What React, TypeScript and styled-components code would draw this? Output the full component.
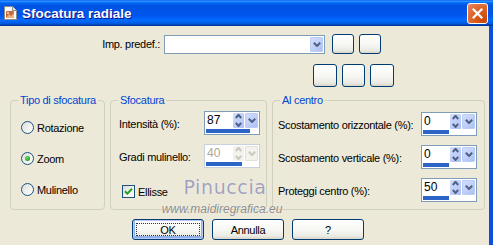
import React from 'react'
import styled, { createGlobalStyle } from 'styled-components'

const GlobalStyle = createGlobalStyle`
    html, body {
        margin: 0;
        padding: 0;
        background: #ece9d8;
    }
    body {
        font-family: 'Liberation Sans', Arial, sans-serif;
        font-size: 11px;
        letter-spacing: -0.3px;
        color: #000;
    }
    * {
        box-sizing: border-box;
    }
`

const Chevron = ({ dir = 'down', color = '#4d6185', w = 7, h = 4 }: { dir?: 'up' | 'down'; color?: string; w?: number; h?: number }) => (
    <svg width={w} height={h + 1} viewBox={`0 0 ${w} ${h + 1}`}>
        <polyline
            points={dir === 'down' ? `0.8,0.8 ${w / 2},${h} ${w - 0.8},0.8` : `0.8,${h} ${w / 2},0.8 ${w - 0.8},${h}`}
            fill="none"
            stroke={color}
            strokeWidth={2}
        />
    </svg>
)

const AppIcon = () => (
    <svg width="15" height="16" viewBox="0 0 15 16">
        <path d="M1.5 1.5h8l4 4v9h-12z" fill="#fbfbfb" stroke="#8c8c8c" />
        <path d="M9.5 1.5v4h4" fill="#e4e4e4" stroke="#8c8c8c" />
        <rect x="3" y="6" width="8" height="7" rx="1" fill="#c46a3c" />
        <path d="M3 13l3-4 2 2 3-3v5z" fill="#eab17d" />
        <circle cx="5" cy="8" r="1" fill="#f6dcc0" />
    </svg>
)

const Window = styled.div`
    position: relative;
    width: 493px;
    height: 245px;
    overflow: hidden;
    display: flex;
    flex-direction: column;
    background: #ece9d8;
`

const TitleBar = styled.div`
    flex: none;
    height: 26px;
    display: flex;
    align-items: center;
    padding: 0 5px 0 3px;
    background: linear-gradient(
        180deg,
        #0058ee 0%,
        #3593ff 4%,
        #288eff 6%,
        #127dff 8%,
        #036ffc 10%,
        #0262ee 14%,
        #0057e5 20%,
        #0054e3 24%,
        #0055eb 56%,
        #005bf5 66%,
        #026afe 76%,
        #0062ef 86%,
        #0052d6 92%,
        #0040ab 96%,
        #003092 100%
    );
`

const TitleText = styled.span`
    margin-left: 4px;
    font-family: 'Liberation Sans', Arial, sans-serif;
    font-weight: bold;
    font-size: 13.5px;
    color: #fff;
    text-shadow: 1px 1px #0f1089;
    letter-spacing: 0;
`

const CloseButton = styled.div`
    margin-left: auto;
    width: 21px;
    height: 21px;
    border: 1px solid #fff;
    border-radius: 3px;
    background: radial-gradient(circle at 85% 85%, #cc4600 0%, #dc6527 55%, #e8876a 100%);
    display: flex;
    align-items: center;
    justify-content: center;
`

const Body = styled.div`
    flex: 1;
    display: flex;
    flex-direction: column;
    border-right: 4px solid #0b4ee0;
`

const PresetRow = styled.div`
    display: flex;
    align-items: center;
    height: 20px;
    margin-top: 8px;
`

const PresetLabel = styled.span`
    width: 164px;
    padding-right: 4px;
    text-align: right;
`

const Combo = styled.div`
    width: 161px;
    height: 19px;
    border: 1px solid #7f9db9;
    background: #fff;
    display: flex;
    justify-content: flex-end;
    padding: 1px;
`

const DropButton = styled.div<{ $disabled?: boolean }>`
    width: 13px;
    height: 15px;
    border: 1px solid ${(p) => (p.$disabled ? '#e4e2d8' : '#b9cdf6')};
    border-radius: 1px;
    background: ${(p) => (p.$disabled ? '#f3f2ec' : 'linear-gradient(135deg, #d3defb 0%, #bccdf8 60%, #aebff0 100%)')};
    display: flex;
    align-items: center;
    justify-content: center;
`

const XpButton = styled.div<{ $w: number; $h: number; $default?: boolean }>`
    position: relative;
    flex: none;
    width: ${(p) => p.$w}px;
    height: ${(p) => p.$h}px;
    border: 1px solid #003c74;
    border-radius: 3px;
    background: linear-gradient(180deg, #ffffff 0%, #f6f6f2 55%, #ebeae3 85%, #d8d4c8 100%);
    box-shadow: ${(p) => (p.$default ? 'inset 0 0 0 1px #b5cbf5, inset 0 -1px 0 2px #8fb0ec' : 'none')};
    display: flex;
    align-items: center;
    justify-content: center;
    font-size: 11px;
    color: #000;

    ${(p) =>
        p.$default &&
        `
        &::after {
            content: '';
            position: absolute;
            inset: 3px;
            border: 1px dotted #333;
        }
    `}
`

const IconButtons = styled.div<{ $gap: number; $left: number; $top: number }>`
    display: flex;
    gap: ${(p) => p.$gap}px;
    margin-left: ${(p) => p.$left}px;
    margin-top: ${(p) => p.$top}px;
`

const GroupsRow = styled.div`
    display: flex;
    gap: 5px;
    margin-top: 7px;
    padding-left: 10px;
`

const Group = styled.fieldset<{ $w: number }>`
    width: ${(p) => p.$w}px;
    height: 116px;
    min-width: 0;
    margin: 0;
    padding: 0;
    border: 1px solid #d0d0bf;
    border-radius: 4px;
`

const Legend = styled.legend`
    margin-left: 7px;
    padding: 0 2px;
    color: #0046d5;
    line-height: 13px;
    font-size: 11px;
`

const RadioList = styled.div`
    display: flex;
    flex-direction: column;
    gap: 18px;
    padding: 14px 0 0 10px;
`

const OptionRow = styled.label<{ $indent?: number; $top?: number }>`
    display: flex;
    align-items: center;
    gap: 3px;
    height: 13px;
    margin-left: ${(p) => p.$indent ?? 0}px;
    margin-top: ${(p) => p.$top ?? 0}px;
`

const RadioCircle = styled.span<{ $checked?: boolean }>`
    position: relative;
    width: 13px;
    height: 13px;
    border-radius: 50%;
    border: 1px solid #1c5180;
    background: linear-gradient(135deg, #dcdcd7 0%, #f3f3ef 60%, #ffffff 100%);

    ${(p) =>
        p.$checked &&
        `
        &::after {
            content: '';
            position: absolute;
            left: 3px;
            top: 3px;
            width: 5px;
            height: 5px;
            border-radius: 50%;
            background: radial-gradient(circle at 40% 40%, #6fe06f 0%, #2aa72a 60%, #168a16 100%);
        }
    `}
`

const CheckBox = styled.span`
    width: 13px;
    height: 13px;
    border: 1px solid #1c5180;
    background: linear-gradient(135deg, #dcdcd7 0%, #f3f3ef 60%, #ffffff 100%);
    display: flex;
    align-items: center;
    justify-content: center;
`

const FieldGrid = styled.div<{ $cols: string; $pad: string }>`
    display: grid;
    grid-template-columns: ${(p) => p.$cols};
    grid-auto-rows: 24px;
    row-gap: 9px;
    align-items: center;
    padding: ${(p) => p.$pad};
`

const FieldLabel = styled.span`
    white-space: nowrap;
    padding-top: 2px;
`

const SpinBox = styled.div<{ $disabled?: boolean }>`
    width: 56px;
    height: 24px;
    border: 1px solid ${(p) => (p.$disabled ? '#c9d1de' : '#7f9db9')};
    background: #fff;
    display: flex;
    flex-direction: column;
`

const SpinTop = styled.div`
    display: flex;
    align-items: flex-start;
    height: 17px;
    padding: 1px 1px 0 0;
`

const SpinValue = styled.span<{ $disabled?: boolean }>`
    flex: 1;
    padding-left: 2px;
    line-height: 15px;
    font-size: 12px;
    letter-spacing: 0;
    color: ${(p) => (p.$disabled ? '#aca899' : '#000')};
`

const SpinArrows = styled.div<{ $disabled?: boolean }>`
    width: 11px;
    height: 15px;
    display: flex;
    flex-direction: column;
    align-items: center;
    justify-content: space-around;
    border-radius: 1px;
    background: ${(p) => (p.$disabled ? '#f3f2ec' : 'linear-gradient(135deg, #d3defb 0%, #bccdf8 60%, #aebff0 100%)')};
    margin-right: 1px;
`

const SpinBar = styled.div`
    height: 4px;
    margin: 0 1px;
    background: #fff;
`

const SpinFill = styled.div`
    height: 100%;
    background: #2d64c8;
`

const BottomRow = styled.div`
    display: flex;
    gap: 8px;
    margin-top: 9px;
    padding-left: 132px;
`

const Watermark = styled.div`
    position: absolute;
    left: 160px;
    top: 176px;
    width: 124px;
    display: flex;
    flex-direction: column;
    align-items: center;
    pointer-events: none;
`

const MarkName = styled.span`
    margin-left: 6px;
    font-family: 'DejaVu Sans', sans-serif;
    font-size: 19px;
    letter-spacing: 0.6px;
    color: rgba(130, 130, 170, 0.75);
    text-shadow: 0 0 1px #fff;
    line-height: 22px;
`

const MarkUrl = styled.span`
    font-family: 'Liberation Sans', Arial, sans-serif;
    font-style: italic;
    font-size: 12px;
    letter-spacing: 0;
    color: rgba(110, 110, 110, 0.8);
    text-shadow: 0 0 1px #fff;
    line-height: 14px;
    margin-top: 4px;
`

interface SpinnerProps {
    value: string
    fill: number
    disabled?: boolean
}

const Spinner = ({ value, fill, disabled }: SpinnerProps) => {
    const arrow = disabled ? '#cbc8bc' : '#4d6185'
    return (
        <SpinBox $disabled={disabled}>
            <SpinTop>
                <SpinValue $disabled={disabled}>{value}</SpinValue>
                <SpinArrows $disabled={disabled}>
                    <Chevron dir="up" color={arrow} />
                    <Chevron dir="down" color={arrow} />
                </SpinArrows>
                <DropButton $disabled={disabled}>
                    <Chevron color={arrow} w={8} h={4} />
                </DropButton>
            </SpinTop>
            <SpinBar>
                <SpinFill style={{ width: `${fill}%` }} />
            </SpinBar>
        </SpinBox>
    )
}

const App = () => (
    <>
        <GlobalStyle />
        <Window>
            <TitleBar>
                <AppIcon />
                <TitleText>Sfocatura radiale</TitleText>
                <CloseButton>
                    <svg width="11" height="11" viewBox="0 0 11 11">
                        <path d="M1.5 1.5l8 8M9.5 1.5l-8 8" stroke="#fff" strokeWidth="2.2" strokeLinecap="square" />
                    </svg>
                </CloseButton>
            </TitleBar>
            <Body>
                <PresetRow>
                    <PresetLabel>Imp. predef.:</PresetLabel>
                    <Combo>
                        <DropButton>
                            <Chevron w={8} />
                        </DropButton>
                    </Combo>
                    <IconButtons $gap={5} $left={7} $top={0}>
                        <XpButton $w={22} $h={20} />
                        <XpButton $w={22} $h={20} />
                    </IconButtons>
                </PresetRow>
                <IconButtons $gap={5} $left={313} $top={10}>
                    <XpButton $w={24} $h={23} />
                    <XpButton $w={23} $h={23} />
                    <XpButton $w={24} $h={23} />
                </IconButtons>
                <GroupsRow>
                    <Group $w={95}>
                        <Legend>Tipo di sfocatura</Legend>
                        <RadioList>
                            <OptionRow>
                                <RadioCircle />
                                Rotazione
                            </OptionRow>
                            <OptionRow>
                                <RadioCircle $checked />
                                Zoom
                            </OptionRow>
                            <OptionRow>
                                <RadioCircle />
                                Mulinello
                            </OptionRow>
                        </RadioList>
                    </Group>
                    <Group $w={157}>
                        <Legend>Sfocatura</Legend>
                        <FieldGrid $cols="85px 56px" $pad="4px 0 0 8px">
                            <FieldLabel>Intensità (%):</FieldLabel>
                            <Spinner value="87" fill={85} />
                            <FieldLabel>Gradi mulinello:</FieldLabel>
                            <Spinner value="40" fill={70} disabled />
                        </FieldGrid>
                        <OptionRow $indent={11} $top={17}>
                            <CheckBox>
                                <svg width="9" height="9" viewBox="0 0 9 9">
                                    <path d="M1 4.2l2.4 2.4L8 1.8" fill="none" stroke="#21a121" strokeWidth="2" />
                                </svg>
                            </CheckBox>
                            Ellisse
                        </OptionRow>
                    </Group>
                    <Group $w={213}>
                        <Legend>Al centro</Legend>
                        <FieldGrid $cols="143px 56px" $pad="5px 0 0 5px">
                            <FieldLabel>Scostamento orizzontale (%):</FieldLabel>
                            <Spinner value="0" fill={50} />
                            <FieldLabel>Scostamento verticale (%):</FieldLabel>
                            <Spinner value="0" fill={50} />
                            <FieldLabel>Proteggi centro (%):</FieldLabel>
                            <Spinner value="50" fill={50} />
                        </FieldGrid>
                    </Group>
                </GroupsRow>
                <BottomRow>
                    <XpButton $w={72} $h={21} $default>
                        OK
                    </XpButton>
                    <XpButton $w={72} $h={21}>
                        Annulla
                    </XpButton>
                    <XpButton $w={72} $h={21}>
                        ?
                    </XpButton>
                </BottomRow>
            </Body>
            <Watermark>
                <MarkName>Pinuccia</MarkName>
                <MarkUrl>www.maidiregrafica.eu</MarkUrl>
            </Watermark>
        </Window>
    </>
)

export default App
